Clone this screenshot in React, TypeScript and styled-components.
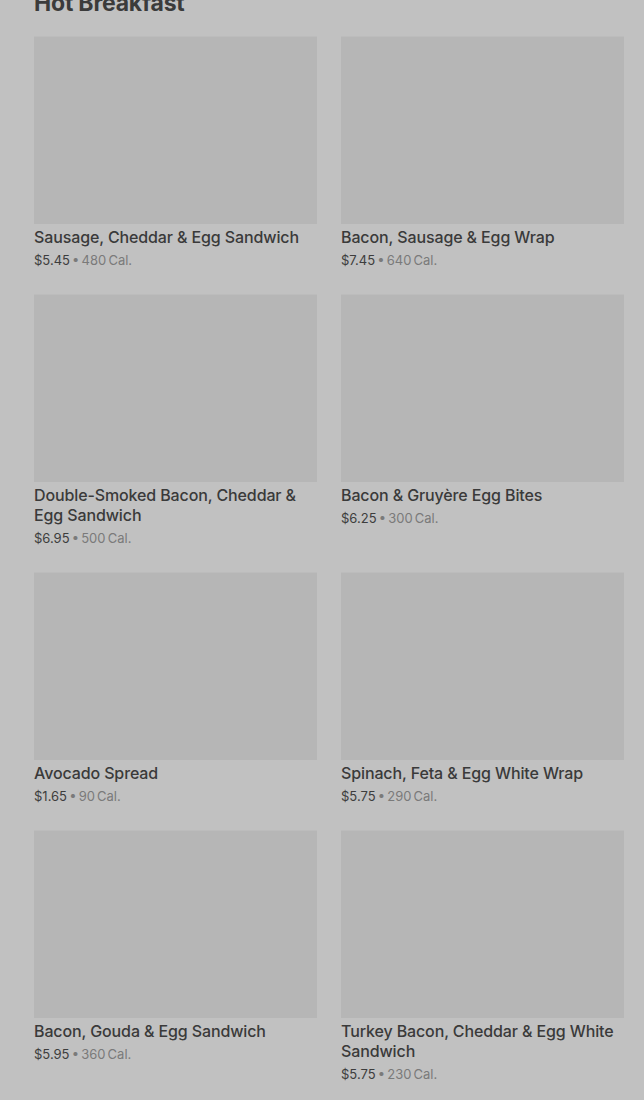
import React from "react";
import styled, { createGlobalStyle } from "styled-components";

const Global = createGlobalStyle`
  html, body { margin: 0; padding: 0; background: #c1c1c1; }
  body { font-family: Inter, "Noto Sans", "Liberation Sans", sans-serif; }
`;

const Page = styled.main`
  padding: 0 20px 0 34px;
  background: #c1c1c1;
  min-height: 1100px;
  box-sizing: border-box;
  overflow: hidden;
`;

const Title = styled.h2`
  margin: -11px 0 0;
  font-size: 23px;
  line-height: 28px;
  font-weight: 700;
  color: #3b3b3b;
  letter-spacing: -0.2px;
`;

const Grid = styled.div`
  display: grid;
  grid-template-columns: 1fr 1fr;
  column-gap: 24px;
  row-gap: 24px;
  margin-top: 19px;
`;

const Card = styled.div`
  display: flex;
  flex-direction: column;
`;

const Thumb = styled.div`
  height: 188px;
  background: #b6b6b6;
  box-shadow: inset 0 1px 0 #bcbcbc;
`;

const Name = styled.div`
  margin-top: 3px;
  font-size: 16px;
  line-height: 20px;
  font-weight: 500;
  color: #3a3a3a;
  letter-spacing: -0.12px;
`;

const Meta = styled.div`
  margin-top: 3px;
  font-size: 13px;
  line-height: 20px;
  color: #3d3d3d;
  word-spacing: -1.5px;
`;

const Cal = styled.span`
  color: #7a7a7a;
`;

const items = [
  { name: "Sausage, Cheddar & Egg Sandwich", price: "$5.45", cal: "480" },
  { name: "Bacon, Sausage & Egg Wrap", price: "$7.45", cal: "640" },
  { name: "Double-Smoked Bacon, Cheddar & Egg Sandwich", price: "$6.95", cal: "500" },
  { name: "Bacon & Gruyère Egg Bites", price: "$6.25", cal: "300" },
  { name: "Avocado Spread", price: "$1.65", cal: "90" },
  { name: "Spinach, Feta & Egg White Wrap", price: "$5.75", cal: "290" },
  { name: "Bacon, Gouda & Egg Sandwich", price: "$5.95", cal: "360" },
  { name: "Turkey Bacon, Cheddar & Egg White Sandwich", price: "$5.75", cal: "230" },
];

export default function App() {
  return (
    <Page>
      <Global />
      <Title>Hot Breakfast</Title>
      <Grid>
        {items.map((it) => (
          <Card key={it.name}>
            <Thumb />
            <Name>{it.name}</Name>
            <Meta>
              {it.price}
              <Cal> • {it.cal} Cal.</Cal>
            </Meta>
          </Card>
        ))}
      </Grid>
    </Page>
  );
}
